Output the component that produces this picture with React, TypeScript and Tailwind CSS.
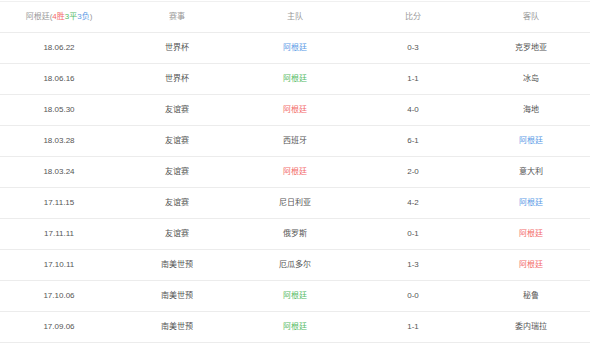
import React from "react";

type Cell = { t: string; c?: "b" | "g" | "r" };
const rows: [string, string, Cell, string, Cell][] = [
  ["18.06.22", "世界杯", { t: "阿根廷", c: "b" }, "0-3", { t: "克罗地亚" }],
  ["18.06.16", "世界杯", { t: "阿根廷", c: "g" }, "1-1", { t: "冰岛" }],
  ["18.05.30", "友谊赛", { t: "阿根廷", c: "r" }, "4-0", { t: "海地" }],
  ["18.03.28", "友谊赛", { t: "西班牙" }, "6-1", { t: "阿根廷", c: "b" }],
  ["18.03.24", "友谊赛", { t: "阿根廷", c: "r" }, "2-0", { t: "意大利" }],
  ["17.11.15", "友谊赛", { t: "尼日利亚" }, "4-2", { t: "阿根廷", c: "b" }],
  ["17.11.11", "友谊赛", { t: "俄罗斯" }, "0-1", { t: "阿根廷", c: "r" }],
  ["17.10.11", "南美世预", { t: "厄瓜多尔" }, "1-3", { t: "阿根廷", c: "r" }],
  ["17.10.06", "南美世预", { t: "阿根廷", c: "g" }, "0-0", { t: "秘鲁" }],
  ["17.09.06", "南美世预", { t: "阿根廷", c: "g" }, "1-1", { t: "委内瑞拉" }],
];

function colorOf(c?: "b" | "g" | "r") {
  if (c === "b") return "text-[#5b9be6]";
  if (c === "g") return "text-[#55bb66]";
  if (c === "r") return "text-[#f36a6a]";
  return "text-[#555]";
}

export default function App() {
  return (
    <div
      className="w-[600px] h-[351px] bg-white pt-px"
      style={{ fontFamily: '"Liberation Sans", "Noto Sans CJK SC", sans-serif' }}
    >
      <div className="w-[590px] border-t border-[#f0f0f0] text-[8px]">
        <div className="grid grid-cols-5 h-[31px] items-center border-b border-[#ececec] text-[#999] text-center">
          <div>
            阿根廷(<span className="text-[#f36a6a]">4胜</span>
            <span className="text-[#55bb66]">3平</span>
            <span className="text-[#5b9be6]">3负</span>)
          </div>
          <div>赛事</div>
          <div>主队</div>
          <div>比分</div>
          <div>客队</div>
        </div>
        {rows.map((r, i) => (
          <div
            key={i}
            className="grid grid-cols-5 h-[31px] items-center border-b border-[#ececec] text-center text-[#555]"
          >
            <div>{r[0]}</div>
            <div>{r[1]}</div>
            <div className={colorOf(r[2].c)}>{r[2].t}</div>
            <div>{r[3]}</div>
            <div className={colorOf(r[4].c)}>{r[4].t}</div>
          </div>
        ))}
      </div>
    </div>
  );
}
